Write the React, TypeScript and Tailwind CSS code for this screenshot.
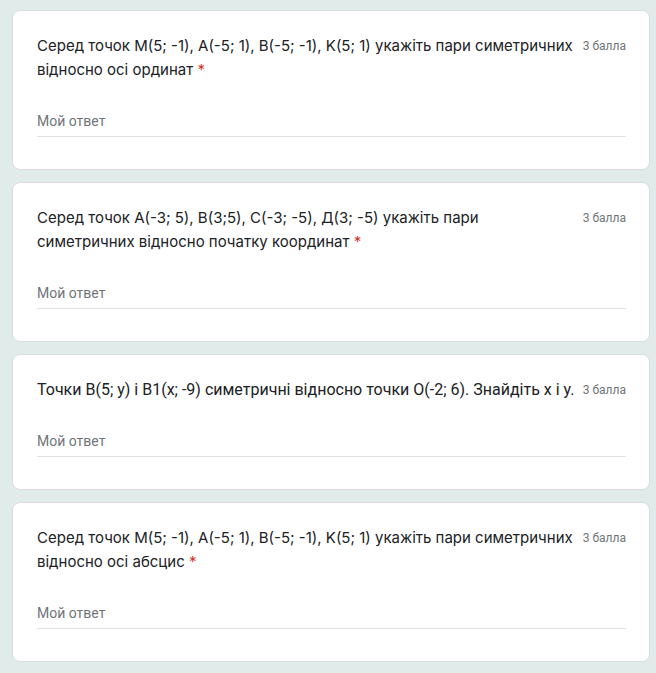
const questions = [
  {
    lines: [
      "Серед точок M(5; -1), A(-5; 1), B(-5; -1), K(5; 1) укажіть пари симетричних",
      "відносно осі ординат",
    ],
    required: true,
    roboto: false,
  },
  {
    lines: [
      "Серед точок A(-3; 5), B(3;5), C(-3; -5), Д(3; -5) укажіть пари",
      "симетричних відносно початку координат",
    ],
    required: true,
    roboto: false,
  },
  {
    lines: ["Точки B(5; у) і B1(x; -9) симетричні відносно точки O(-2; 6). Знайдіть x і y."],
    required: false,
    roboto: true,
  },
  {
    lines: [
      "Серед точок M(5; -1), A(-5; 1), B(-5; -1), K(5; 1) укажіть пари симетричних",
      "відносно осі абсцис",
    ],
    required: true,
    roboto: false,
  },
];

function QuestionCard({ lines, required, roboto }: { lines: string[]; required: boolean; roboto: boolean }) {
  return (
    <div className="bg-white rounded-lg border border-[#dadce0] pt-[23px] pl-6 pr-[23px] pb-8">
      <div className="flex items-start">
        <div
          className={
            roboto
              ? "flex-1 min-w-0 whitespace-nowrap text-[16px] leading-6 text-[#202124] font-['Roboto',sans-serif]"
              : "flex-1 min-w-0 whitespace-nowrap text-[15px] leading-6 text-[#202124] font-['Inter',sans-serif]"
          }
        >
          {lines.map((line, i) => (
            <div key={i}>
              {line}
              {required && i === lines.length - 1 && <span className="text-[#d93025]"> *</span>}
            </div>
          ))}
        </div>
        <div className="shrink-0 ml-2 text-[12px] leading-6 text-[#70757a] font-['Roboto',sans-serif]">
          3 балла
        </div>
      </div>
      <div className="mt-6 h-[31px] border-b border-[#e0e0e0] flex items-center">
        <span className="text-[14px] text-[#70757a] font-['Roboto',sans-serif]">Мой ответ</span>
      </div>
    </div>
  );
}

export default function App() {
  return (
    <div className="min-h-screen bg-[#e1ecea] pl-3 pr-[6px] pt-[10px] pb-3">
      <div className="flex flex-col gap-3">
        {questions.map((q, i) => (
          <QuestionCard key={i} {...q} />
        ))}
      </div>
    </div>
  );
}
